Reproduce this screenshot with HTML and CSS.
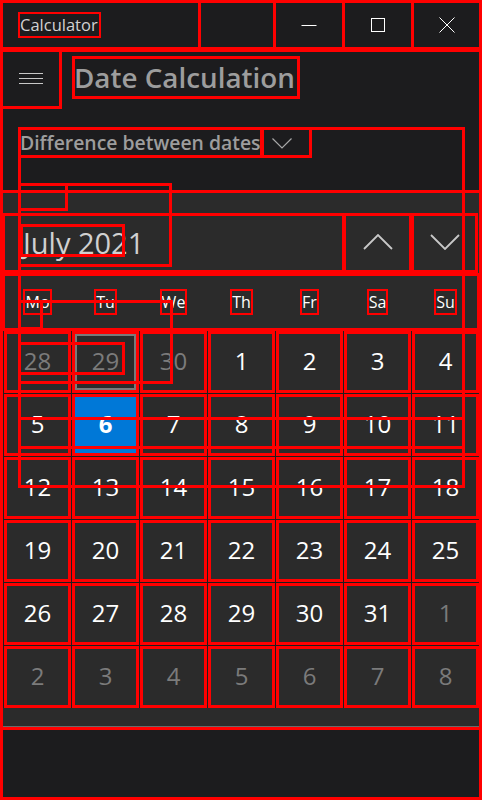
FILE: index.html
```html
<!DOCTYPE html>
<html lang="en">
<head>
<meta charset="utf-8">
<title>Calculator</title>
<link rel="stylesheet" href="styles.css">
</head>
<body>
<div class="app">
  <header class="titlebar">
    <div class="tb-title"><span class="app-name">Calculator</span></div>
    <div class="tb-drag"></div>
    <button class="cap cap-min" aria-label="Minimize"><svg width="16" height="16" viewBox="0 0 16 16"><path d="M0.5 8.5H15.5" stroke="#fff" stroke-width="1" fill="none"/></svg></button>
    <button class="cap cap-max" aria-label="Maximize"><svg width="16" height="16" viewBox="0 0 16 16"><rect x="1.5" y="1.5" width="13" height="13" stroke="#fff" stroke-width="1" fill="none"/></svg></button>
    <button class="cap cap-close" aria-label="Close"><svg width="16" height="16" viewBox="0 0 16 16"><path d="M0.5 0.5L15.5 15.5M15.5 0.5L0.5 15.5" stroke="#fff" stroke-width="1" fill="none"/></svg></button>
  </header>

  <main class="page">
    <div class="nav">
      <button class="hamburger" aria-label="Menu"><svg width="24" height="11" viewBox="0 0 24 11"><path d="M0 0.5H24M0 5.5H24M0 10.5H24" stroke="#c8c8c8" stroke-width="1" fill="none"/></svg></button>
      <h1 class="page-title">Date Calculation</h1>
    </div>
    <div class="mode">
      <span class="mode-text">Difference between dates</span>
      <span class="mode-chev"><svg width="20" height="11" viewBox="0 0 20 11"><path d="M0.5 0.5L10 10L19.5 0.5" stroke="#a8a8a8" stroke-width="1.2" fill="none"/></svg></span>
    </div>
    <div class="from-label">From</div>
  </main>

  <section class="flyout">
    <div class="fly-top"></div>
    <div class="fly-header">
      <div class="month-title">July 2021</div>
      <button class="nav-btn nav-up" aria-label="Previous"><svg width="30" height="16" viewBox="0 0 30 16"><path d="M1 15L15 1L29 15" stroke="#c8c8c8" stroke-width="1.8" fill="none"/></svg></button>
      <button class="nav-btn nav-down" aria-label="Next"><svg width="30" height="16" viewBox="0 0 30 16"><path d="M1 1L15 15L29 1" stroke="#c8c8c8" stroke-width="1.8" fill="none"/></svg></button>
    </div>
    <div class="weekdays">
      <span>Mo</span><span>Tu</span><span>We</span><span>Th</span><span>Fr</span><span>Sa</span><span>Su</span>
    </div>
    <div class="days">
      <div class="day out">28</div><div class="day out sel">29</div><div class="day out">30</div><div class="day">1</div><div class="day">2</div><div class="day">3</div><div class="day">4</div>
      <div class="day">5</div><div class="day today">6</div><div class="day">7</div><div class="day">8</div><div class="day">9</div><div class="day">10</div><div class="day">11</div>
      <div class="day">12</div><div class="day">13</div><div class="day">14</div><div class="day">15</div><div class="day">16</div><div class="day">17</div><div class="day">18</div>
      <div class="day">19</div><div class="day">20</div><div class="day">21</div><div class="day">22</div><div class="day">23</div><div class="day">24</div><div class="day">25</div>
      <div class="day">26</div><div class="day">27</div><div class="day">28</div><div class="day">29</div><div class="day">30</div><div class="day">31</div><div class="day out">1</div>
      <div class="day out">2</div><div class="day out">3</div><div class="day out">4</div><div class="day out">5</div><div class="day out">6</div><div class="day out">7</div><div class="day out">8</div>
    </div>
    <div class="fly-bottom"></div>
  </section>

  <div class="annot">
    <div class="a-page"></div>
    <div class="a-top"></div>
    <div class="a-content"></div>
    <div class="a-from"></div>
    <div class="a-picker"></div>
    <div class="a-month"></div>
    <div class="a-k"></div>
    <div class="a-l"></div>
    <div class="a-m"></div>
    <div class="a-n"></div>
    <div class="a-bottom"></div>
  </div>
</div>
</body>
</html>
```

FILE: styles.css
```css
* { box-sizing: border-box; }

html, body { margin: 0; padding: 0; }

body {
  width: 482px;
  height: 800px;
  overflow: hidden;
  background: #1c1c1e;
  font-family: "Open Sans", "Noto Sans", sans-serif;
  color: #fff;
}

.app {
  position: relative;
  width: 482px;
  height: 800px;
}

button {
  font: inherit;
  background: none;
  border: 0;
  padding: 0;
  margin: 0;
  color: inherit;
}

/* Title bar */
.titlebar {
  display: flex;
  height: 50px;
}

.titlebar > * {
  outline: 3px solid #f00;
  outline-offset: -3px;
}

.tb-title {
  width: 201px;
  display: flex;
  align-items: center;
  padding-left: 18px;
}

.app-name {
  display: inline-block;
  height: 26px;
  line-height: 26px;
  padding: 0 3px 0 2px;
  font-size: 16.5px;
  color: #d2d2d2;
  outline: 2px solid #f00;
  outline-offset: -2px;
}

.tb-drag {
  width: 78px;
  margin-left: -3px;
}

.cap {
  width: 72px;
  margin-left: -3px;
  display: flex;
  align-items: center;
  justify-content: center;
}

.cap-close { width: 71px; }

/* Page */
.nav {
  display: flex;
  height: 60px;
  margin-top: -1px;
}

.hamburger {
  width: 62px;
  height: 60px;
  display: flex;
  align-items: center;
  justify-content: center;
  padding-bottom: 2px;
  outline: 3px solid #f00;
  outline-offset: -3px;
}

.page-title {
  margin: 7px 0 0 10px;
  height: 43px;
  line-height: 43px;
  padding: 0 5px 0 2px;
  font-size: 27.8px;
  font-weight: 600;
  color: #9d9d9d;
  white-space: nowrap;
  outline: 3px solid #f00;
  outline-offset: -3px;
}

.mode {
  display: flex;
  height: 31px;
  margin: 18px 0 0 18px;
}

.mode-text {
  width: 245px;
  padding-left: 2px;
  line-height: 31px;
  font-size: 19.4px;
  font-weight: 600;
  color: #9d9d9d;
  white-space: nowrap;
  outline: 3px solid #f00;
  outline-offset: -3px;
}

.mode-chev {
  width: 51px;
  margin-left: -2px;
  display: flex;
  align-items: center;
  padding: 2px 0 0 11px;
  outline: 3px solid #f00;
  outline-offset: -3px;
}

.from-label {
  margin: 25px 0 0 18px;
  width: 50px;
  height: 28px;
  line-height: 28px;
  padding-left: 2px;
  font-size: 15px;
  color: #cfcfcf;
}

/* Calendar flyout */
.flyout {
  position: absolute;
  left: 2px;
  top: 193px;
  width: 478px;
  height: 534px;
  background: #2b2b2b;
  border-bottom: 1px solid #6a6a6a;
  display: flex;
  flex-direction: column;
}

.fly-top { height: 20px; }

.fly-header {
  display: flex;
  height: 60px;
}

.month-title {
  width: 343px;
  padding-left: 21px;
  line-height: 60px;
  font-size: 29px;
  color: #d0d0d0;
  white-space: nowrap;
  outline: 3px solid #f00;
  outline-offset: -3px;
}

.nav-btn {
  width: 69px;
  margin-left: -2px;
  display: flex;
  align-items: center;
  justify-content: center;
  padding-bottom: 2px;
  outline: 3px solid #f00;
  outline-offset: -3px;
}

.nav-down {
  width: 67px;
  margin-left: -1px;
}

.weekdays {
  display: grid;
  grid-template-columns: repeat(7, 67px);
  column-gap: 1px;
  padding: 0 1px 0 2px;
  height: 58px;
  align-items: center;
  justify-items: center;
  outline: 3px solid #f00;
  outline-offset: -3px;
}

.weekdays span {
  display: inline-block;
  line-height: 26px;
  padding: 0 2px;
  font-size: 16px;
  color: #fff;
  outline: 2px solid #f00;
  outline-offset: -2px;
}

.days {
  display: grid;
  grid-template-columns: repeat(7, 67px);
  grid-auto-rows: 62px;
  gap: 1px;
  padding: 0 1px 0 2px;
  background: #1e1e1e;
}

.day {
  background: #2b2b2b;
  display: flex;
  align-items: center;
  justify-content: center;
  padding-bottom: 3px;
  font-size: 24px;
  color: #fff;
  outline: 3px solid #f00;
  outline-offset: -3px;
}

.day.out { color: #7b7b7b; }

.day.sel { box-shadow: inset 0 0 0 5px #7a7a7a; }

.day.today {
  background: #0078d7;
  font-weight: 700;
}

.fly-bottom { height: 18px; }

/* Annotation boxes drawn over everything */
.annot {
  position: absolute;
  left: 0;
  top: 0;
  width: 482px;
  height: 800px;
  pointer-events: none;
}

.annot div {
  position: absolute;
  border: 3px solid #f00;
}

.a-page    { left: 0;    top: 49px;  width: 482px; height: 751px; }
.a-top     { left: 0;    top: 49px;  width: 482px; height: 144px; }
.a-content { left: 18px; top: 127px; width: 447px; height: 361px; }
.a-from    { left: 18px; top: 183px; width: 50px;  height: 28px; }
.a-picker  { left: 18px; top: 183px; width: 154px; height: 84px; }
.a-month   { left: 20px; top: 224px; width: 105px; height: 33px; }
.a-k       { left: 18px; top: 300px; width: 155px; height: 84px; }
.a-l       { left: 18px; top: 300px; width: 25px;  height: 30px; }
.a-m       { left: 18px; top: 342px; width: 107px; height: 33px; }
.a-n       { left: 18px; top: 417px; width: 447px; height: 32px; }
.a-bottom  { left: 0;    top: 727px; width: 482px; height: 73px; }
```
